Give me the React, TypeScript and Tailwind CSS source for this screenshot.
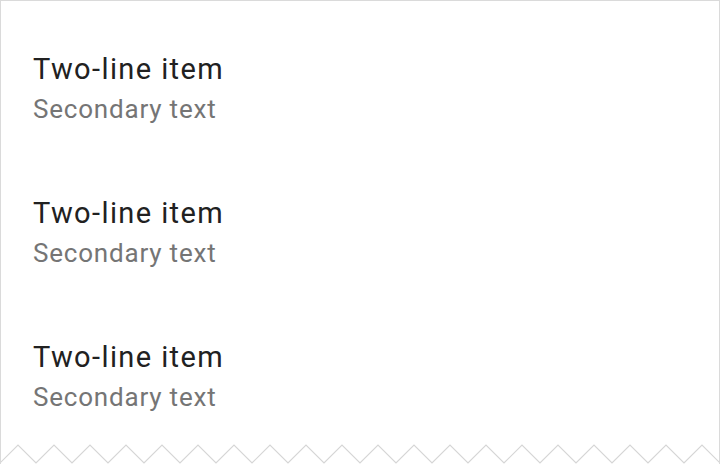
import React from 'react';

const items = [
  { primary: 'Two-line item', secondary: 'Secondary text' },
  { primary: 'Two-line item', secondary: 'Secondary text' },
  { primary: 'Two-line item', secondary: 'Secondary text' },
];

// zigzag edge: valleys every 36px, peaks halfway
const zigzag = Array.from({ length: 41 }, (_, i) => `${i * 18},${i % 2 === 0 ? 18 : 0}`).join(' ');

const App = () => {
  return (
    <div className="relative w-[720px] h-[464px] overflow-hidden bg-white border-x border-t border-[#dadada] font-['Roboto',sans-serif]">
      <ul className="pt-4">
        {items.map((item, idx) => (
          <li key={idx} className="h-[144px] px-8 flex flex-col justify-center">
            <span className="text-[29px] leading-[40px] text-[#212121] tracking-[1.4px]">{item.primary}</span>
            <span className="text-[26px] leading-[40px] text-[#757575] tracking-[0.8px]">{item.secondary}</span>
          </li>
        ))}
      </ul>
      <svg
        className="absolute left-[-1px] bottom-0"
        width="722"
        height="20"
        viewBox="0 -1 722 20"
      >
        <polygon points={`0,18 ${zigzag} 722,18 722,20 0,20`} fill="white" />
        <polyline points={zigzag} fill="none" stroke="#d6d6d6" strokeWidth="1.2" />
      </svg>
    </div>
  );
};

export default App;
